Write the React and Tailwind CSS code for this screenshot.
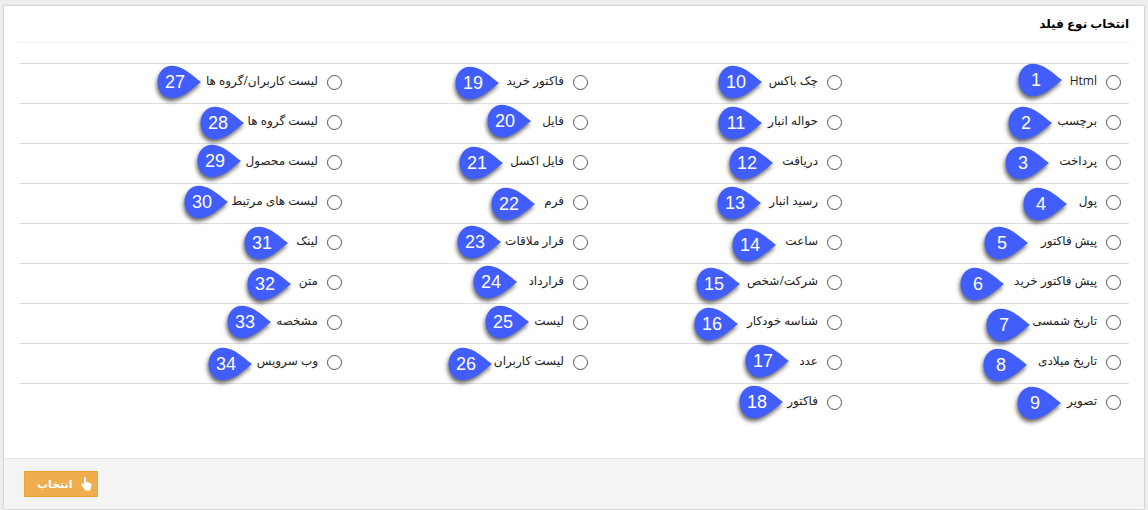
import { useState } from "react";

// Fields are listed column by column; `pin` holds the callout tip's distance
// from the right edge of its cell and its centre from the top of the row.
const columns = [
  [
    { label: "Html", pin: [67, 16] },
    { label: "برچسب", pin: [77, 19] },
    { label: "پرداخت", pin: [80, 19] },
    { label: "پول", pin: [62, 20] },
    { label: "پیش فاکتور", pin: [101, 19] },
    { label: "پیش فاکتور خرید", pin: [125, 20] },
    { label: "تاریخ شمسی", pin: [99, 21] },
    { label: "تاریخ میلادی", pin: [102, 21] },
    { label: "تصویر", pin: [68, 19] },
  ],
  [
    { label: "چک باکس", pin: [88, 18] },
    { label: "حواله انبار", pin: [88, 19] },
    { label: "دریافت", pin: [77, 19] },
    { label: "رسید انبار", pin: [89, 19] },
    { label: "ساعت", pin: [74, 21] },
    { label: "شرکت/شخص", pin: [110, 20] },
    { label: "شناسه خودکار", pin: [112, 20] },
    { label: "عدد", pin: [61, 17] },
    { label: "فاکتور", pin: [67, 18] },
  ],
  [
    { label: "فاکتور خرید", pin: [97, 19] },
    { label: "فایل", pin: [65, 17] },
    { label: "فایل اکسل", pin: [93, 19] },
    { label: "فرم", pin: [61, 20] },
    { label: "قرار ملاقات", pin: [95, 18] },
    { label: "قرارداد", pin: [79, 18] },
    { label: "لیست", pin: [67, 18] },
    { label: "لیست کاربران", pin: [104, 20] },
  ],
  [
    { label: "لیست کاربران/گروه ها", pin: [149, 18] },
    { label: "لیست گروه ها", pin: [106, 19] },
    { label: "لیست محصول", pin: [109, 17] },
    { label: "لیست های مرتبط", pin: [122, 18] },
    { label: "لینک", pin: [62, 19] },
    { label: "متن", pin: [59, 20] },
    { label: "مشخصه", pin: [79, 18] },
    { label: "وب سرویس", pin: [98, 20] },
  ],
];

const starts = [1, 10, 19, 27];
const rows = Array.from({ length: 9 }, (_, r) =>
  columns.map((column, c) => column[r] && { ...column[r], number: starts[c] + r })
);

function Pin({ number, pin }) {
  return (
    <span
      className="pointer-events-none absolute z-10 h-8 w-11 -translate-y-1/2"
      style={{ right: pin[0], top: pin[1] }}
    >
      <svg
        viewBox="0 0 44 32"
        className="absolute inset-0 h-8 w-11 overflow-visible drop-shadow-[-1px_3px_2px_rgba(0,0,0,0.6)]"
        aria-hidden="true"
      >
        <path
          d="M44 16C36 10 26 -0.3 15 -0.3C6.5 -0.3 0.5 7 0.5 16S6.5 32.3 15 32.3C26 32.3 36 22 44 16Z"
          fill="#415dfb"
        />
      </svg>
      <span className="absolute inset-y-0 left-0 flex w-9 items-center justify-center font-['Liberation_Sans',Arial,sans-serif] text-lg text-white">
        {number}
      </span>
    </span>
  );
}

function Field({ field, selected, onSelect }) {
  const id = `field-${field.number}`;
  return (
    <div className="relative flex h-full items-start gap-[9px] px-2 pt-[7px]">
      <input
        id={id}
        type="radio"
        name="field-type"
        checked={selected}
        onChange={onSelect}
        className="mt-1 size-[15px] shrink-0 appearance-none rounded-full border border-[#555] bg-white checked:border-4"
      />
      <label htmlFor={id} className="text-xs leading-5 whitespace-nowrap text-[#222]">
        {field.label}
      </label>
      <Pin number={field.number} pin={field.pin} />
    </div>
  );
}

function HandIcon() {
  return (
    <svg viewBox="0 0 14 16" className="h-4 w-3" fill="currentColor" aria-hidden="true">
      <path d="M3.4 1.6C3.4.7 4 .2 4.7.2S6 .7 6 1.6v4.3c.5-.4 1.7-.3 2 .4.6-.4 1.7-.2 2 .5 1-.3 2 .2 2 1.400v2.600c0 1.300-.9 2-1.100 3.200v1.700H4.300v-1.600C3.300 13 1.900 11.300.9 9.800.2 8.800.3 7.700 1.100 7.300c.8-.4 1.700.1 2.300.9Z" />
    </svg>
  );
}

export default function App() {
  const [selected, setSelected] = useState(null);
  return (
    <div
      dir="rtl"
      className="bg-[#eeeeee] px-1 pt-1.5 pb-px font-['Open_Sans','DejaVu_Sans',sans-serif]"
    >
      <main className="bg-white shadow-[0_0_2px_rgba(0,0,0,0.3)]">
        <div className="px-[15px] pb-[35px]">
          <h1 className="mb-5 h-[37px] border-b border-[#eeeeee] pt-2 text-xs leading-5 font-bold text-black">
            انتخاب نوع فیلد
          </h1>
          <div role="radiogroup" aria-label="انتخاب نوع فیلد">
            {rows.map((row, r) => (
              <div
                key={r}
                className="grid h-10 grid-cols-[279fr_254fr_246fr_331fr] border-t border-[#dddddd]"
              >
                {row.map(
                  (field) =>
                    field && (
                      <Field
                        key={field.number}
                        field={field}
                        selected={selected === field.number}
                        onSelect={() => setSelected(field.number)}
                      />
                    )
                )}
              </div>
            ))}
          </div>
        </div>
        <footer className="flex justify-end border-t border-[#e5e5e5] bg-[#f4f4f4] px-5 py-3">
          <button
            type="button"
            className="flex h-[26px] items-center gap-2 border border-[#eea236] bg-[#f0ad4e] pr-1 pl-3 text-[11px] font-bold text-white"
          >
            <HandIcon />
            انتخاب
          </button>
        </footer>
      </main>
    </div>
  );
}
